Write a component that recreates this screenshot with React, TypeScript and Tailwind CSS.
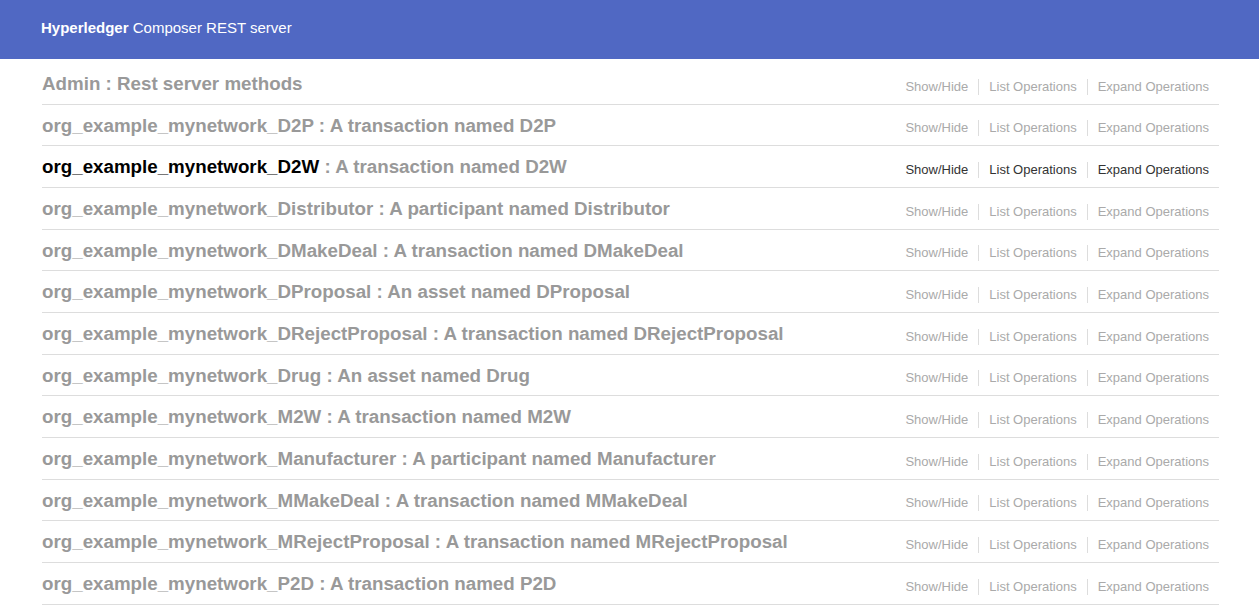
import React from "react";

const resources: { name: string; desc: string; active?: boolean }[] = [
  { name: "Admin", desc: "Rest server methods" },
  { name: "org_example_mynetwork_D2P", desc: "A transaction named D2P" },
  { name: "org_example_mynetwork_D2W", desc: "A transaction named D2W", active: true },
  { name: "org_example_mynetwork_Distributor", desc: "A participant named Distributor" },
  { name: "org_example_mynetwork_DMakeDeal", desc: "A transaction named DMakeDeal" },
  { name: "org_example_mynetwork_DProposal", desc: "An asset named DProposal" },
  { name: "org_example_mynetwork_DRejectProposal", desc: "A transaction named DRejectProposal" },
  { name: "org_example_mynetwork_Drug", desc: "An asset named Drug" },
  { name: "org_example_mynetwork_M2W", desc: "A transaction named M2W" },
  { name: "org_example_mynetwork_Manufacturer", desc: "A participant named Manufacturer" },
  { name: "org_example_mynetwork_MMakeDeal", desc: "A transaction named MMakeDeal" },
  { name: "org_example_mynetwork_MRejectProposal", desc: "A transaction named MRejectProposal" },
  { name: "org_example_mynetwork_P2D", desc: "A transaction named P2D" },
];

const Options = ({ active }: { active?: boolean }) => {
  const color = active ? "text-[#333]" : "text-[#aaa]";
  return (
    <ul className={`flex items-center text-[13px] mt-[4.5px] ${color}`}>
      <li className="px-[10px] border-r border-[#ddd] leading-[16px]">Show/Hide</li>
      <li className="px-[10px] border-r border-[#ddd] leading-[16px]">List Operations</li>
      <li className="px-[10px] leading-[16px]">Expand Operations</li>
    </ul>
  );
};

export default function App() {
  return (
    <div
      className="min-h-screen bg-white"
      style={{ fontFamily: '"Liberation Sans", Arial, sans-serif' }}
    >
      <div className="h-[59px] bg-[#5068c3] flex items-center px-[41px]">
        <span className="text-[15px] text-white -mt-[3px]">
          <span className="font-bold">Hyperledger</span> Composer REST server
        </span>
      </div>
      <div className="pl-[42px] pr-[40px] pt-[4px]">
        {resources.map((r) => (
          <div
            key={r.name}
            className="flex items-start justify-between pt-[11px] pb-[9px] border-b border-[#ddd]"
          >
            <h2 className="text-[18.75px] font-bold leading-[20.67px] text-[#999]">
              <span className={r.active ? "text-black" : ""}>{r.name}</span> : {r.desc}
            </h2>
            <Options active={r.active} />
          </div>
        ))}
      </div>
    </div>
  );
}
